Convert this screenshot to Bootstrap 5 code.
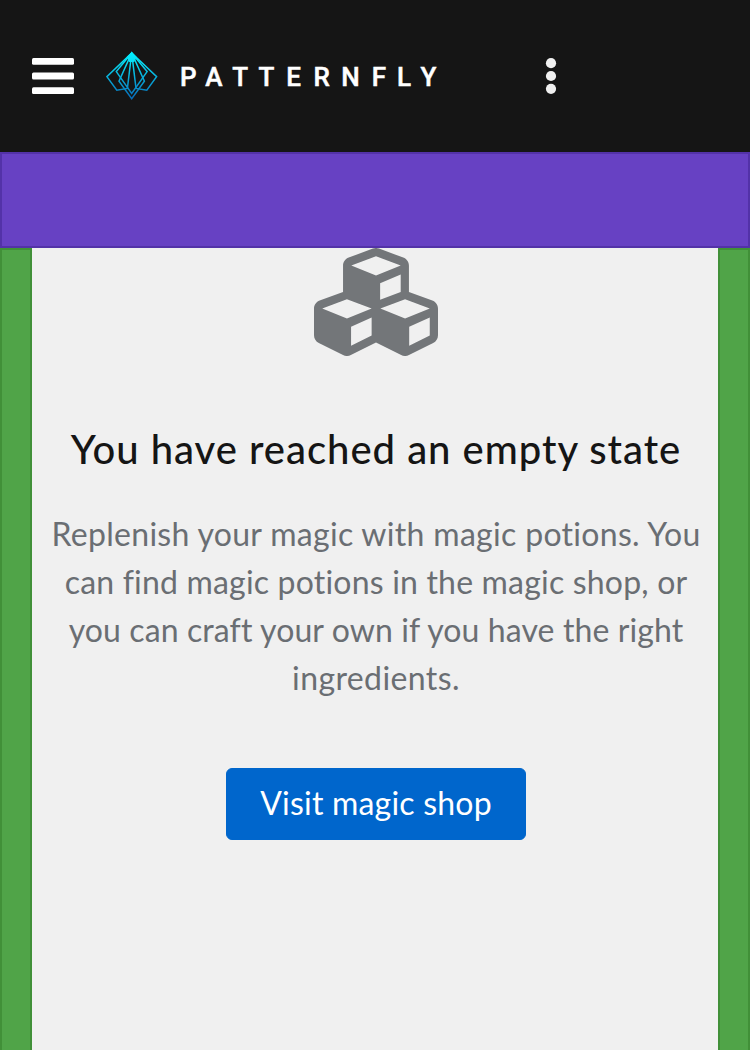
<!DOCTYPE html>
<html lang="en">
<head>
<meta charset="utf-8">
<meta name="viewport" content="width=device-width, initial-scale=1">
<title>PatternFly empty state</title>
<link href="https://cdn.jsdelivr.net/npm/bootstrap@5.3.0/dist/css/bootstrap.min.css" rel="stylesheet">
<style>
body { font-family: Lato, "Liberation Sans", sans-serif; background: #f0f0f0; }
.masthead { height: 152px; background: #151515; padding-left: 32px; }
.menu-toggle { width: 42px; height: 36px; margin-right: 30px; }
.brand-logo { width: 340px; height: 60px; margin-right: 98px; }
.brand-logo text { font: 500 26px Roboto, "Liberation Sans", sans-serif; stroke: #fff; stroke-width: .5px; }
.spacer-top { height: 96px; background: #6741c3; border: 2px solid #5332a8; }
.spacer-side { width: 32px; background: #50a448; border: 2px solid #419038; border-bottom: 0; }
.empty-state { padding-left: 2px; }
.cubes { width: 124px; height: 108px; }
.empty-title { font-size: 40px; font-weight: 500; line-height: 52px; color: #151515; margin: 67px 0 35px; letter-spacing: .98px; }
.empty-body { font-size: 32px; line-height: 48px; color: #6a6e73; margin-bottom: 66px; }
.line-a { letter-spacing: .31px; }
.line-b { letter-spacing: .19px; }
.line-c { letter-spacing: .1px; }
.line-d { letter-spacing: .4px; }
.shop-btn { width: 300px; height: 72px; font-size: 32px; line-height: 48px; padding: 0 0 3px; border-radius: 6px; letter-spacing: .2px; --bs-btn-bg: #06c; --bs-btn-border-color: #06c; }
</style>
</head>
<body class="vh-100 d-flex flex-column overflow-hidden">
<header class="masthead d-flex align-items-center flex-shrink-0">
  <button class="btn p-0 border-0 menu-toggle d-flex" aria-label="Menu">
    <svg width="42" height="36" viewBox="0 0 42 36" fill="#fff"><rect width="42" height="6.8" rx="1.5"/><rect y="14.6" width="42" height="6.8" rx="1.5"/><rect y="29.2" width="42" height="6.8" rx="1.5"/></svg>
  </button>
  <svg class="brand-logo" viewBox="104 46 340 60" role="img" aria-label="PatternFly">
    <defs><linearGradient id="wing" gradientUnits="userSpaceOnUse" x1="131.7" y1="52" x2="131.7" y2="100"><stop offset="0" stop-color="#00f0ff"/><stop offset=".25" stop-color="#08d8f0"/><stop offset="1" stop-color="#0766b5"/></linearGradient></defs>
    <g fill="none" stroke="url(#wing)" stroke-width="1.5">
      <path d="M131.7 53L106.9 76.6L116.8 90.2L127.4 88.4L131.7 53L136 88.4L146.8 90.2L156.6 76.6Z"/>
      <path d="M131.7 53L116.3 71.6L131.7 93.4L147.1 71.6Z"/>
      <path d="M131.7 53L119 81.2L131.7 98.8L144.4 81.2Z"/>
    </g>
    <path d="M131.7 52l5 5-2.5 5h-5l-2.5-5z" fill="url(#wing)"/>
    <text x="188.4 213.800 240.100 266.300 293.500 321.700 350.500 378.800 404 428.500" y="86" text-anchor="middle" fill="#fff">PATTERNFLY</text>
  </svg>
  <button class="btn p-0 border-0 d-flex" aria-label="More">
    <svg width="18" height="40" viewBox="542 56 18 40" fill="#f0f0f0"><circle cx="551" cy="63.2" r="5.1"/><circle cx="551" cy="76" r="5.1"/><circle cx="551" cy="88.8" r="5.1"/></svg>
  </button>
</header>
<div class="spacer-top flex-shrink-0"></div>
<div class="d-flex flex-grow-1">
  <div class="spacer-side flex-shrink-0"></div>
  <main class="empty-state flex-grow-1 d-flex flex-column align-items-center text-center text-nowrap">
    <svg class="cubes flex-shrink-0" viewBox="0 32 512 448" preserveAspectRatio="none" fill="#737679"><path d="M488.600 250.200L392 214V105.500c0-15-9.300-28.400-23.400-33.700l-100-37.500c-8.100-3.100-17.100-3.100-25.300 0l-100 37.500c-14.100 5.300-23.400 18.700-23.400 33.700V214l-96.600 36.200C9.300 255.500 0 268.900 0 283.900V394c0 13.600 7.700 26.100 19.900 32.200l100 50c10.100 5.100 22.100 5.100 32.200 0l103.900-52 103.900 52c10.100 5.100 22.100 5.100 32.200 0l100-50c12.200-6.100 19.900-18.600 19.900-32.200V283.900c0-15-9.300-28.400-23.400-33.700zM358 214.800l-85 31.900v-68.200l85-37v73.300zM154 104.100l102-38.200 102 38.200v.6l-102 41.400-102-41.400v-.6zm84 291.100l-85 42.500v-79.100l85-38.800v75.400zm0-112l-102 41.400-102-41.400v-.6l102-38.200 102 38.200v.6zm240 112l-85 42.500v-79.100l85-38.800v75.400zm0-112l-102 41.400-102-41.400v-.6l102-38.200 102 38.200v.6z"/></svg>
    <h1 class="empty-title">You have reached an empty state</h1>
    <p class="empty-body"><span class="line-a">Replenish your magic with magic potions. You</span><br><span class="line-b">can find magic potions in the magic shop, or</span><br><span class="line-c">you can craft your own if you have the right</span><br><span class="line-d">ingredients.</span></p>
    <button class="btn btn-primary shop-btn">Visit magic shop</button>
  </main>
  <div class="spacer-side flex-shrink-0"></div>
</div>
<script src="https://cdn.jsdelivr.net/npm/bootstrap@5.3.0/dist/js/bootstrap.bundle.min.js"></script>
</body>
</html>
